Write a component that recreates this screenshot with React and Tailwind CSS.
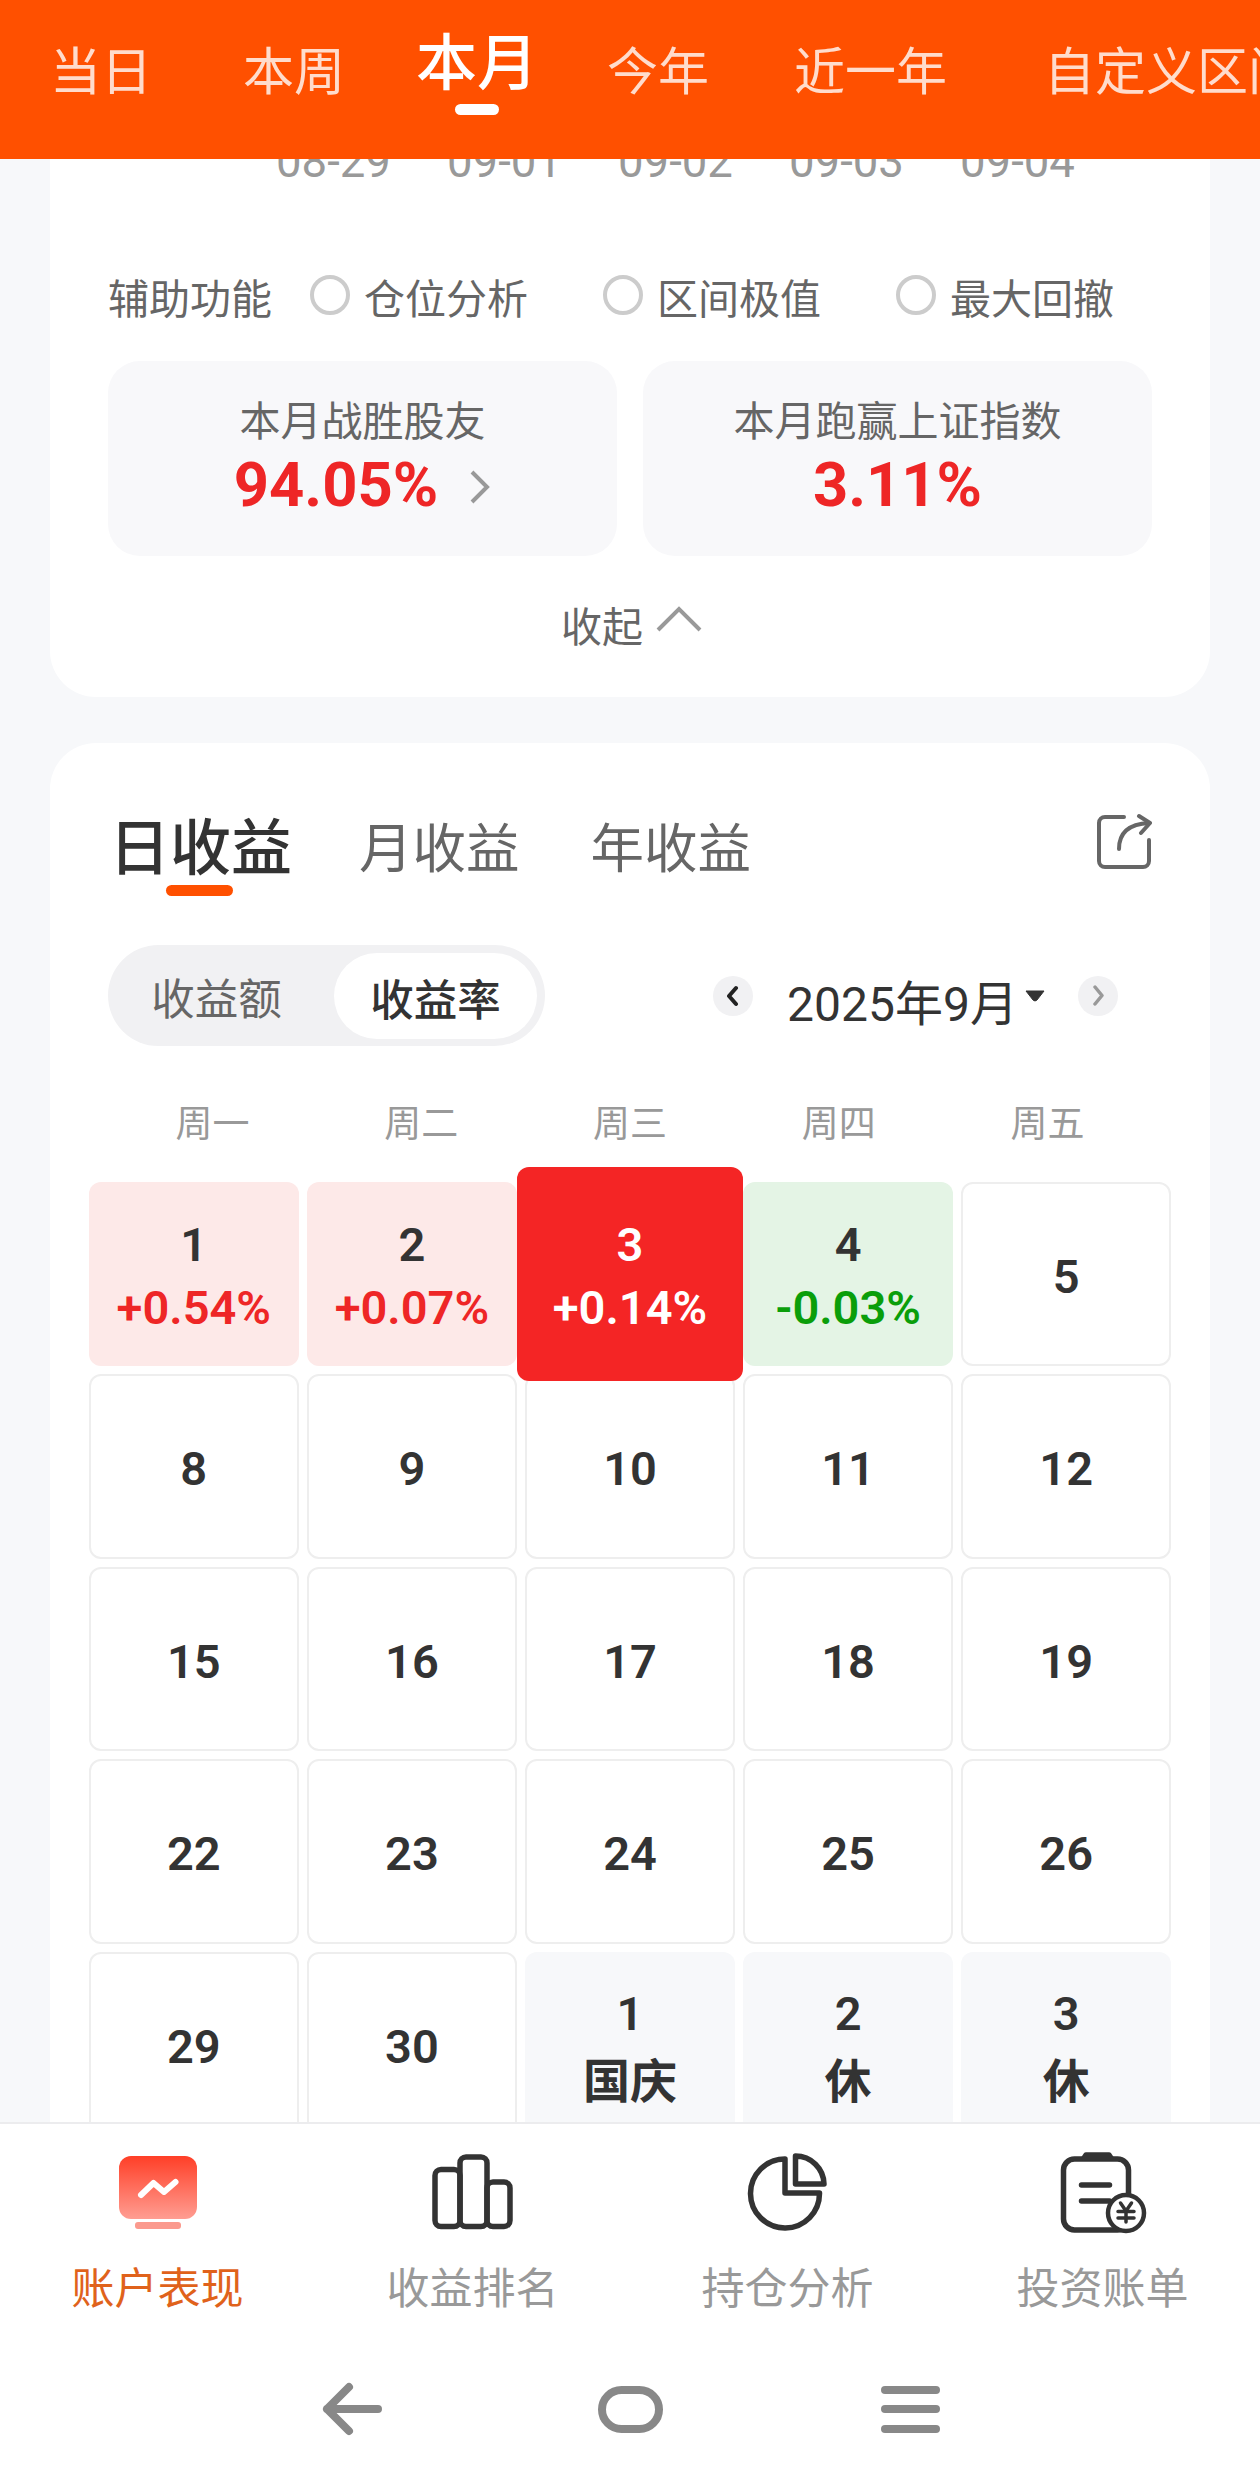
import { useState } from 'react';

const ranges = [
  { label: '当日', className: 'ml-[50px]' },
  { label: '本周', className: 'ml-[91px]' },
  { label: '本月', className: 'ml-[71px]' },
  { label: '今年', className: 'ml-[69px]' },
  { label: '近一年', className: 'ml-[85px]' },
  { label: '自定义区间', className: 'ml-[97px]' },
];

const chartDates = ['08-29', '09-01', '09-02', '09-03', '09-04'];
const helpers = ['仓位分析', '区间极值', '最大回撤'];
const weekdays = ['周一', '周二', '周三', '周四', '周五'];

const days = [
  { day: 1, text: '+0.54%', type: 'up' },
  { day: 2, text: '+0.07%', type: 'up' },
  { day: 3, text: '+0.14%', type: 'active' },
  { day: 4, text: '-0.03%', type: 'down' },
  { day: 5 },
  { day: 8 }, { day: 9 }, { day: 10 }, { day: 11 }, { day: 12 },
  { day: 15 }, { day: 16 }, { day: 17 }, { day: 18 }, { day: 19 },
  { day: 22 }, { day: 23 }, { day: 24 }, { day: 25 }, { day: 26 },
  { day: 29 }, { day: 30 },
  { day: 1, text: '国庆', type: 'rest' },
  { day: 2, text: '休', type: 'rest' },
  { day: 3, text: '休', type: 'rest' },
];

const cellStyles = {
  up: 'pt-[4px] bg-[#fde9e8]',
  down: 'pt-[4px] bg-[#e4f4e5]',
  rest: 'pt-[8px] bg-[#f7f8fa]',
  active: 'pt-[4px] relative z-10 -mx-[8px] -my-[15px] bg-[#f42525] text-white',
  normal: 'pt-[5px] bg-white border-2 border-[#eeeeee]',
};

const textStyles = {
  up: 'text-[#ee2626]',
  down: 'text-[#0a9e0a]',
  rest: 'pt-[5px] text-[#333333]',
  active: 'text-white',
};

function DayCell({ item }) {
  const type = item.type || 'normal';
  return (
    <div className={`flex flex-col items-center justify-center rounded-[12px] text-[47px] leading-[63px] font-semibold ${cellStyles[type]}`}>
      <span>{item.day}</span>
      {item.text && <span className={textStyles[type]}>{item.text}</span>}
    </div>
  );
}

function ShareIcon() {
  return (
    <svg className="w-[56px] h-[56px]" viewBox="0 0 56 56" fill="none" stroke="#666666" strokeWidth="4" strokeLinecap="round" strokeLinejoin="round">
      <path d="M28 4H9a6 6 0 0 0-6 6v38a6 6 0 0 0 6 6h38a6 6 0 0 0 6-6V27" />
      <path d="M23 36C23 20 32 11 53 10" />
      <path d="M43 3l11 7-9 10" />
    </svg>
  );
}

function AccountIcon() {
  return (
    <svg className="w-[84px] h-[84px]" viewBox="0 0 84 84" fill="none">
      <defs>
        <linearGradient id="account" x1="0" y1="0" x2="0" y2="1">
          <stop offset="0" stopColor="#ff3f27" />
          <stop offset="1" stopColor="#ff9d92" />
        </linearGradient>
      </defs>
      <rect x="3" y="5" width="78" height="63" rx="12" fill="url(#account)" />
      <path d="M25 44l12.500-12L48 41l11.500-10" stroke="#ffffff" strokeWidth="6" strokeLinecap="round" strokeLinejoin="round" />
      <rect x="19" y="71" width="46" height="7" rx="3" fill="#fb9a8e" />
    </svg>
  );
}

function RankIcon() {
  return (
    <svg className="w-[84px] h-[84px]" viewBox="0 0 84 84" fill="none" stroke="#333333" strokeWidth="5.5">
      <rect x="4" y="18.500" width="25" height="57" rx="6" />
      <rect x="29" y="6" width="27" height="69.500" rx="6" />
      <rect x="56" y="31" width="23" height="44.500" rx="6" />
    </svg>
  );
}

function PieIcon() {
  return (
    <svg className="w-[84px] h-[84px]" viewBox="0 0 84 84" fill="none" stroke="#333333" strokeWidth="5.5" strokeLinejoin="round">
      <path d="M39 8A34.500 34.500 0 1 0 73.500 42H39z" />
      <path d="M49.500 5A28.500 28.500 0 0 1 78 33H49.500z" />
    </svg>
  );
}

function BillIcon() {
  return (
    <svg className="w-[88px] h-[84px]" viewBox="0 0 88 84" fill="none" stroke="#333333" strokeWidth="5.5" strokeLinecap="round">
      <rect x="4.500" y="8" width="65" height="71" rx="11" />
      <path d="M25 7l2-3h23l2 3z" fill="#333333" strokeLinejoin="round" />
      <path d="M22.500 34h28M22.500 50h28" />
      <circle cx="67" cy="62" r="18" fill="#ffffff" strokeWidth="4.500" />
      <path d="M61.500 52l5.500 8 5.500-8M67 60v11M59 60.500h16M59 67h16" strokeWidth="3.500" />
    </svg>
  );
}

const navItems = [
  { label: '账户表现', icon: AccountIcon },
  { label: '收益排名', icon: RankIcon },
  { label: '持仓分析', icon: PieIcon },
  { label: '投资账单', icon: BillIcon },
];

export default function App() {
  const [range, setRange] = useState('本月');
  const [nav, setNav] = useState('账户表现');

  return (
    <div className="flex flex-col w-[1260px] h-[2480px] overflow-hidden bg-[#f7f8fa] text-[#333333] font-['Roboto','Noto_Sans_CJK_SC',sans-serif]">
      <header className="flex shrink-0 h-[159px] bg-[#ff5000] whitespace-nowrap overflow-hidden">
        {ranges.map((item) => (
          <button key={item.label} onClick={() => setRange(item.label)} className={`flex flex-col items-center shrink-0 ${item.className}`}>
            {range === item.label ? (
              <>
                <span className="mt-[34px] text-[61px] leading-[61px] font-medium text-white">{item.label}</span>
                <span className="mt-[9px] w-[44px] h-[11px] rounded-full bg-white"></span>
              </>
            ) : (
              <span className="mt-[47px] text-[51px] leading-[51px] text-[#ffdccc]">{item.label}</span>
            )}
          </button>
        ))}
      </header>

      <main className="flex-1 min-h-0 overflow-hidden px-[50px]">
        <section className="h-[538px] px-[58px] rounded-b-[46px] bg-white">
          <div className="flex gap-[56px] h-[25px] ml-[168px] overflow-hidden">
            {chartDates.map((date) => (
              <span key={date} className="w-[115px] -mt-[20px] text-[45.5px] leading-[45px] text-[#999999]">{date}</span>
            ))}
          </div>

          <div className="flex items-center mt-[91px] h-[50px] text-[41px] leading-[50px] text-[#666666]">
            <span className="shrink-0 w-[202px]">辅助功能</span>
            {helpers.map((label) => (
              <label key={label} className="flex items-center gap-[14px] shrink-0 w-[293px]">
                <span className="w-[40px] h-[40px] -mt-[10px] rounded-full border-4 border-[#cccccc]"></span>
                <span className="whitespace-nowrap">{label}</span>
              </label>
            ))}
          </div>

          <div className="grid grid-cols-2 gap-[26px] mt-[36px]">
            <div className="flex flex-col items-center h-[195px] pt-[36px] rounded-[32px] bg-[#f8f8fa]">
              <span className="text-[41px] leading-[50px] text-[#666666]">本月战胜股友</span>
              <div className="flex items-center gap-[32px] mt-[7px]">
                <span className="text-[61.5px] leading-[62px] font-bold text-[#ee2626]">94.05%</span>
                <svg className="w-[21px] h-[34px] mt-[3px]" viewBox="0 0 21 34" fill="none" stroke="#999999" strokeWidth="4">
                  <path d="M2 2l15 15L2 32" />
                </svg>
              </div>
            </div>
            <div className="flex flex-col items-center h-[195px] pt-[36px] rounded-[32px] bg-[#f8f8fa]">
              <span className="text-[41px] leading-[50px] text-[#666666]">本月跑赢上证指数</span>
              <span className="mt-[7px] text-[61.5px] leading-[62px] font-bold text-[#ee2626]">3.11%</span>
            </div>
          </div>

          <button className="flex items-center justify-center gap-[13px] w-full h-[50px] mt-[47px] pl-[3px] text-[41px] leading-[50px] text-[#666666]">
            收起
            <svg className="w-[46px] h-[26px] -mt-[19px]" viewBox="0 0 46 26" fill="none" stroke="#999999" strokeWidth="4">
              <path d="M2 24L23 3l21 21" />
            </svg>
          </button>
        </section>

        <section className="mt-[46px] h-[1500px] px-[39px] rounded-t-[46px] bg-white">
          <div className="flex items-start pt-[71px] h-[202px] pl-[20px] pr-[19px]">
            <div className="flex flex-col items-center">
              <span className="mt-[5px] text-[61px] leading-[61px] font-medium">日收益</span>
              <span className="mt-[5px] mr-[2px] w-[67px] h-[11px] rounded-full bg-[#ff5000]"></span>
            </div>
            <span className="mt-[9px] ml-[67px] text-[53.5px] leading-[53px] text-[#666666]">月收益</span>
            <span className="mt-[9px] ml-[71px] text-[53.5px] leading-[53px] text-[#666666]">年收益</span>
            <button className="ml-auto -mt-px"><ShareIcon /></button>
          </div>

          <div className="flex items-center h-[101px] px-[19px]">
            <div className="flex items-center w-[437px] h-[101px] p-[8px] rounded-full bg-[#f1f1f3] text-[43.5px] leading-[50px]">
              <span className="flex-1 pt-[11px] pr-[17px] text-center text-[#666666]">收益额</span>
              <span className="w-[203px] h-[86px] pt-[24px] rounded-full bg-white text-center font-medium">收益率</span>
            </div>
            <button className="flex items-center justify-center ml-[168px] w-[40px] h-[40px] rounded-full bg-[#f1f1f3]">
              <svg className="w-[12px] h-[22px]" viewBox="0 0 12 22" fill="none" stroke="#222222" strokeWidth="4" strokeLinecap="round" strokeLinejoin="round">
                <path d="M9 3L2 11l7 8" />
              </svg>
            </button>
            <span className="ml-[34px] mt-[18px] w-[228px] text-[48px] leading-[56px] whitespace-nowrap">2025年9月</span>
            <svg className="ml-[9px] w-[22px] h-[12px]" viewBox="0 0 22 12">
              <path d="M2 1h18L13 10q-2 2-4 0z" fill="#333333" stroke="#333333" strokeLinejoin="round" />
            </svg>
            <button className="flex items-center justify-center ml-[32px] w-[40px] h-[40px] rounded-full bg-[#f1f1f3]">
              <svg className="w-[12px] h-[22px]" viewBox="0 0 12 22" fill="none" stroke="#999999" strokeWidth="3.500" strokeLinecap="round" strokeLinejoin="round">
                <path d="M3 2l7 8.500L3 19" />
              </svg>
            </button>
          </div>

          <div className="grid grid-cols-5 mt-[59px] h-[76px] px-[19px] text-[37px] leading-[40px] text-[#999999] text-center">
            {weekdays.map((w) => (
              <span key={w}>{w}</span>
            ))}
          </div>

          <div className="grid grid-cols-5 auto-rows-[184.5px] gap-x-[8.5px] gap-y-[8px] pt-[0.5px]">
            {days.map((item, i) => (
              <DayCell key={i} item={item} />
            ))}
          </div>
        </section>
      </main>

      <footer className="shrink-0 h-[358px] border-t-2 border-[#ececee] bg-white">
        <nav className="grid grid-cols-4 h-[226px] pt-[27px]">
          {navItems.map(({ label, icon: Icon }) => (
            <button key={label} onClick={() => setNav(label)} className="flex flex-col items-center">
              <Icon />
              <span className={`mt-[29px] text-[43px] leading-[50px] ${nav === label ? 'text-[#e0621b]' : 'text-[#999999]'}`}>{label}</span>
            </button>
          ))}
        </nav>
        {/* 系统导航栏 */}
        <div className="flex items-center h-[118px] pl-[322px] text-[#888888]">
          <svg className="w-[60px] h-[54px]" viewBox="0 0 60 54" fill="none" stroke="currentColor" strokeWidth="8" strokeLinecap="round" strokeLinejoin="round">
            <path d="M27 5L5 27l22 22M5 27h51" />
          </svg>
          <div className="ml-[216px] w-[65px] h-[47px] rounded-full border-8 border-[#888888]"></div>
          <div className="flex flex-col justify-between ml-[218px] w-[59px] h-[47px]">
            <span className="h-[8px] rounded-full bg-[#888888]"></span>
            <span className="h-[8px] rounded-full bg-[#888888]"></span>
            <span className="h-[8px] rounded-full bg-[#888888]"></span>
          </div>
        </div>
      </footer>
    </div>
  );
}
